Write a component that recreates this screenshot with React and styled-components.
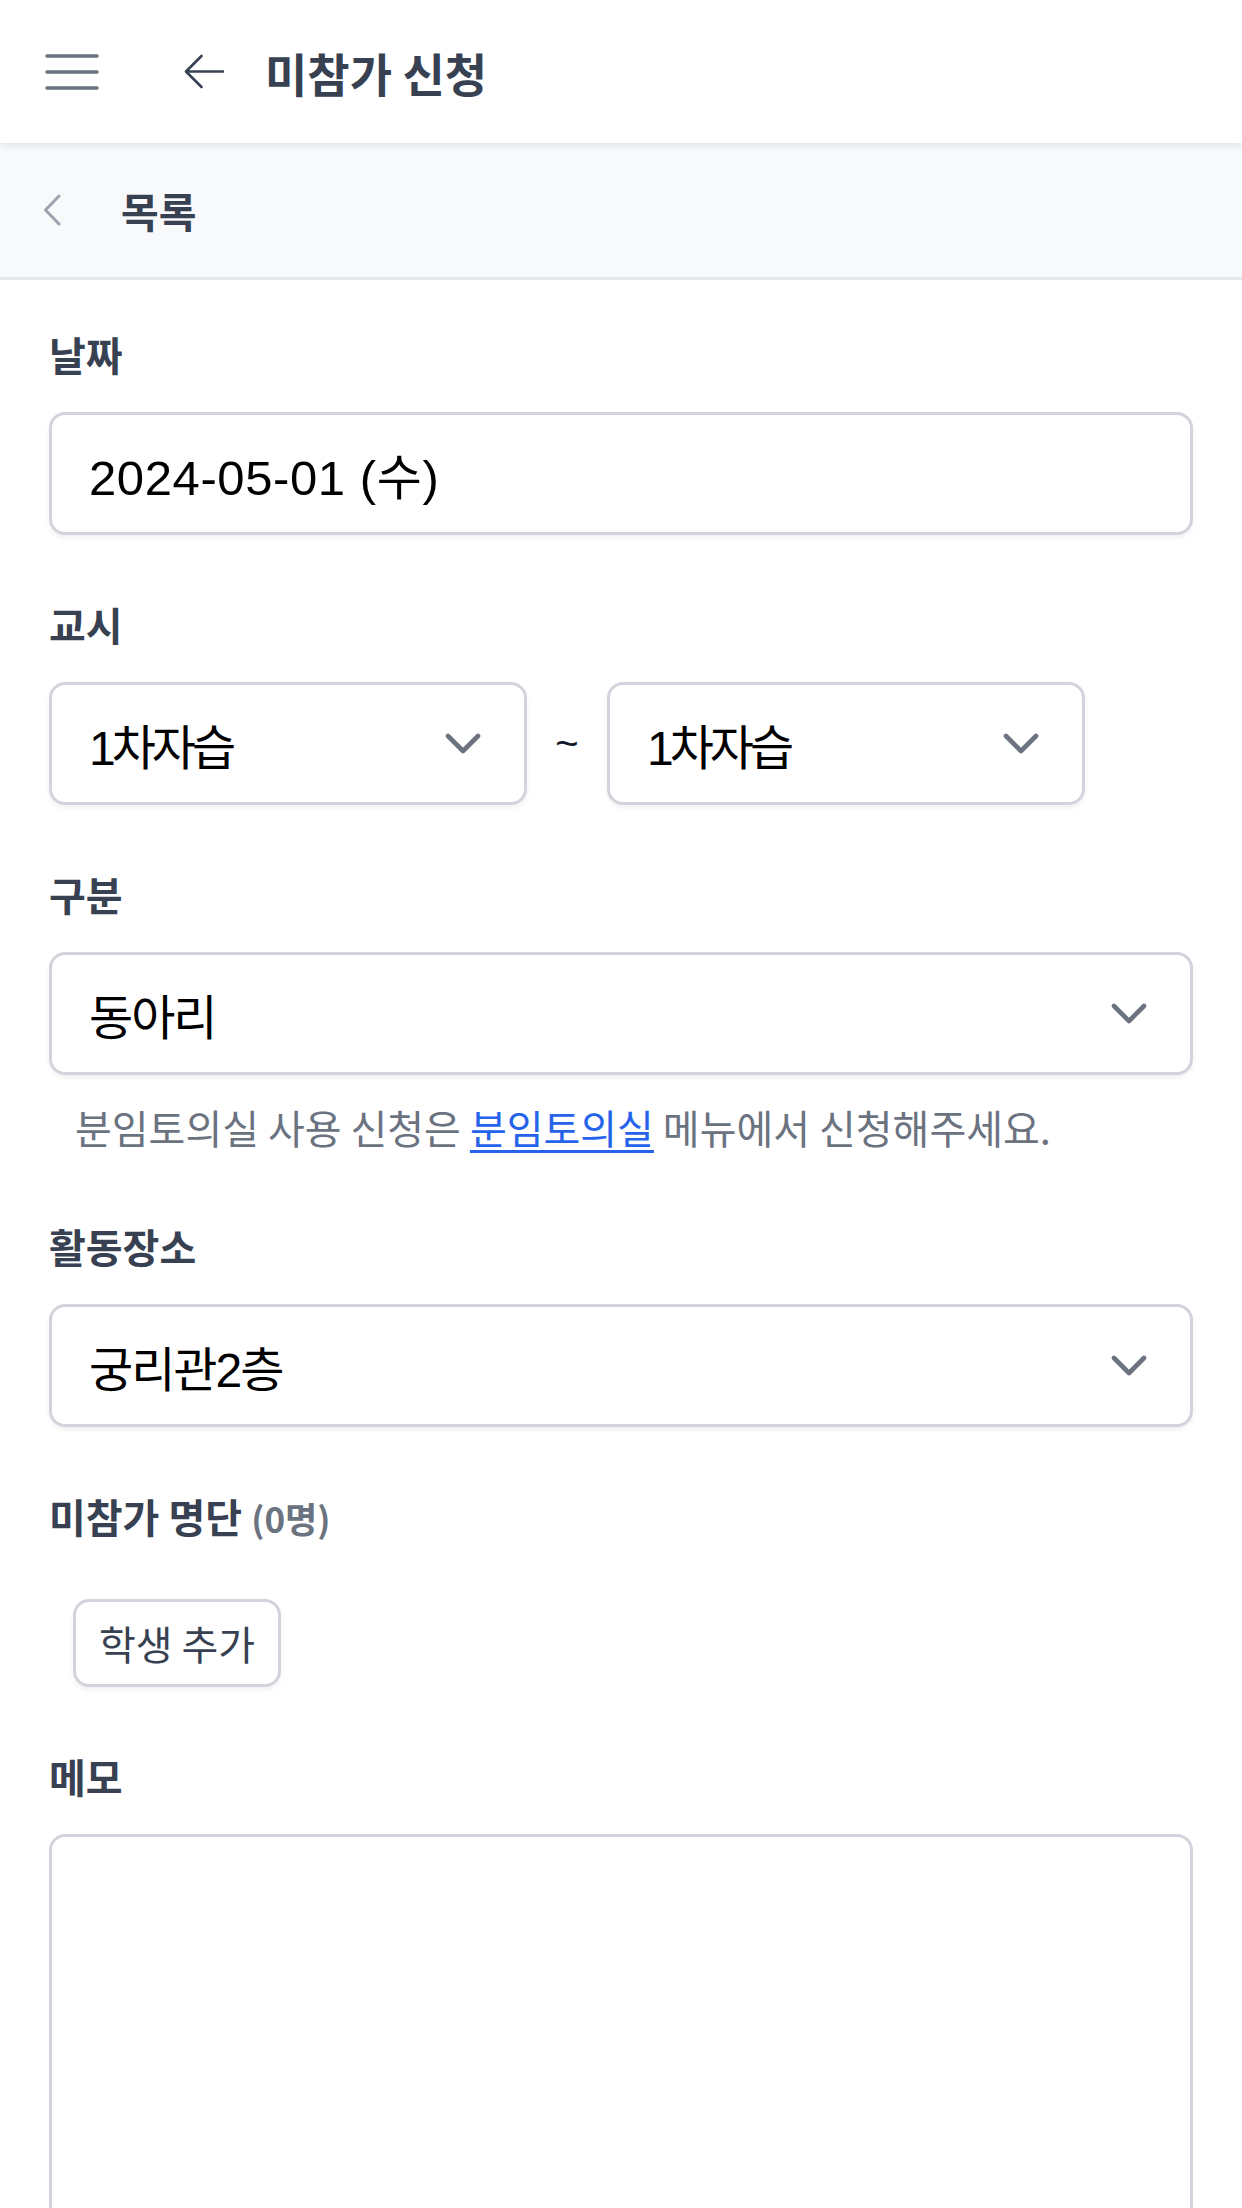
import styled, { createGlobalStyle } from "styled-components";

const GlobalStyle = createGlobalStyle`
  html, body {
    margin: 0;
    padding: 0;
    background: #ffffff;
  }
  body {
    font-family: "Noto Sans CJK KR", "Noto Sans", sans-serif;
    color: #374151;
  }
  * {
    box-sizing: border-box;
  }
`;

const hangulStack = `"Noto Sans CJK KR", sans-serif`;
const valueStack = `"Liberation Sans", "Noto Sans CJK KR", sans-serif`;

const MenuIcon = () => (
  <svg width="54" height="38" viewBox="0 0 54 38" fill="none">
    <g stroke="#6b7280" strokeWidth="3.6" strokeLinecap="round">
      <line x1="2" y1="3" x2="52" y2="3" />
      <line x1="2" y1="19" x2="52" y2="19" />
      <line x1="2" y1="35" x2="52" y2="35" />
    </g>
  </svg>
);

const ArrowLeft = () => (
  <svg width="40" height="35" viewBox="0 0 40 35" fill="none">
    <path d="M39 17.5H2.5M17.5 2L2 17.5L17.5 33" stroke="#374151" strokeWidth="2.6" strokeLinecap="round" strokeLinejoin="round" />
  </svg>
);

const ChevronLeft = () => (
  <svg width="18" height="32" viewBox="0 0 18 32" fill="none">
    <path d="M16 2L2.5 16L16 30" stroke="#9ca3af" strokeWidth="3" strokeLinecap="round" strokeLinejoin="round" />
  </svg>
);

const ChevronDown = () => (
  <svg width="36" height="22" viewBox="0 0 36 22" fill="none">
    <path d="M3 3L18 18L33 3" stroke="#6b7280" strokeWidth="4.6" strokeLinecap="round" strokeLinejoin="round" />
  </svg>
);

const App = () => {
  return (
    <>
      <GlobalStyle />
      <Page>
        <TopBar>
          <IconButton aria-label="menu">
            <MenuIcon />
          </IconButton>
          <BackButton aria-label="back">
            <ArrowLeft />
          </BackButton>
          <Title>미참가 신청</Title>
        </TopBar>

        <SubBar>
          <ChevronLeft />
          <SubTitle>목록</SubTitle>
        </SubBar>

        <Form>
          <Field>
            <Label>날짜</Label>
            <Control>
              <Value $spacing="0.6px" $size="49px">2024-05-01 (수)</Value>
            </Control>
          </Field>

          <Field>
            <Label>교시</Label>
            <RangeRow>
              <Control>
                <Value $spacing="-4px">1차자습</Value>
                <ChevronDown />
              </Control>
              <Tilde>~</Tilde>
              <Control>
                <Value $spacing="-4px">1차자습</Value>
                <ChevronDown />
              </Control>
            </RangeRow>
          </Field>

          <Field>
            <Label>구분</Label>
            <Control>
              <Value>동아리</Value>
              <ChevronDown />
            </Control>
            <Help>
              분임토의실 사용 신청은 <HelpLink href="#">분임토의실</HelpLink> 메뉴에서 신청해주세요.
            </Help>
          </Field>

          <Field>
            <Label>활동장소</Label>
            <Control>
              <Value>궁리관2층</Value>
              <ChevronDown />
            </Control>
          </Field>

          <Field>
            <Label>
              미참가 명단 <Count>(0명)</Count>
            </Label>
            <AddButton type="button">학생 추가</AddButton>
          </Field>

          <Field>
            <Label>메모</Label>
            <Memo />
          </Field>
        </Form>
      </Page>
    </>
  );
};

export default App;

const Page = styled.div`
  width: 1242px;
  background: #ffffff;
`;

const TopBar = styled.header`
  position: relative;
  z-index: 2;
  height: 143px;
  display: flex;
  align-items: center;
  padding-left: 45px;
  background: #ffffff;
  box-shadow: 0 3px 7px rgba(17, 24, 39, 0.09);
`;

const IconButton = styled.div`
  display: flex;
  align-items: center;
  width: 54px;
  height: 54px;
`;

const BackButton = styled(IconButton)`
  width: 40px;
  margin-left: 85px;
`;

const Title = styled.h1`
  margin: 0 0 0 41px;
  font-family: ${hangulStack};
  font-size: 46px;
  font-weight: 700;
  line-height: 1;
  color: #374151;
  font-feature-settings: "palt";
`;

const SubBar = styled.nav`
  height: 137px;
  display: flex;
  align-items: center;
  padding-left: 43px;
  background: #f8f9fb;
  border-bottom: 3px solid #e5e7eb;
`;

const SubTitle = styled.span`
  margin-left: 60px;
  font-family: ${hangulStack};
  font-size: 41px;
  font-weight: 600;
  color: #374151;
  font-feature-settings: "palt";
`;

const Form = styled.main`
  display: flex;
  flex-direction: column;
  gap: 59px;
  padding: 44px 49px 0;
`;

const Field = styled.section`
  display: flex;
  flex-direction: column;
  align-items: stretch;
`;

const Label = styled.label`
  display: block;
  margin-bottom: 28px;
  font-family: ${hangulStack};
  font-size: 40px;
  font-weight: 600;
  line-height: 60px;
  color: #374151;
  font-feature-settings: "palt";
`;

const Count = styled.span`
  font-size: 35px;
  font-weight: 600;
  color: #6b7280;
`;

const Control = styled.div`
  height: 123px;
  min-width: 0;
  display: flex;
  align-items: center;
  justify-content: space-between;
  padding: 0 43px 0 37px;
  background: #ffffff;
  border: 3px solid #d1d5db;
  border-radius: 16px;
  box-shadow: 0 3px 5px rgba(17, 24, 39, 0.06);
`;

const Value = styled.span`
  font-family: ${valueStack};
  font-size: ${(p) => p.$size || "48px"};
  letter-spacing: ${(p) => p.$spacing || "-2px"};
  color: #000000;
  font-feature-settings: "palt";
`;

const RangeRow = styled.div`
  width: 1036px;
  display: grid;
  grid-template-columns: 1fr 80px 1fr;
  align-items: center;
`;

const Tilde = styled.span`
  text-align: center;
  font-family: ${valueStack};
  font-size: 40px;
  color: #111827;
`;

const Help = styled.p`
  margin: 22px 0 0 26px;
  font-family: ${hangulStack};
  font-size: 40px;
  line-height: 60px;
  color: #6b7280;
  font-feature-settings: "palt";
`;

const HelpLink = styled.a`
  color: #2563eb;
  text-decoration: underline;
  text-decoration-thickness: 3px;
  text-underline-offset: 6px;
`;

const AddButton = styled.button`
  align-self: flex-start;
  margin: 23px 0 0 24px;
  width: 208px;
  height: 88px;
  padding: 0;
  background: #ffffff;
  border: 3px solid #d1d5db;
  border-radius: 16px;
  box-shadow: 0 3px 5px rgba(17, 24, 39, 0.06);
  font-family: ${hangulStack};
  font-size: 40px;
  color: #374151;
  font-feature-settings: "palt";
`;

const Memo = styled.div`
  height: 380px;
  background: #ffffff;
  border: 3px solid #d1d5db;
  border-bottom: none;
  border-radius: 16px 16px 0 0;
`;
